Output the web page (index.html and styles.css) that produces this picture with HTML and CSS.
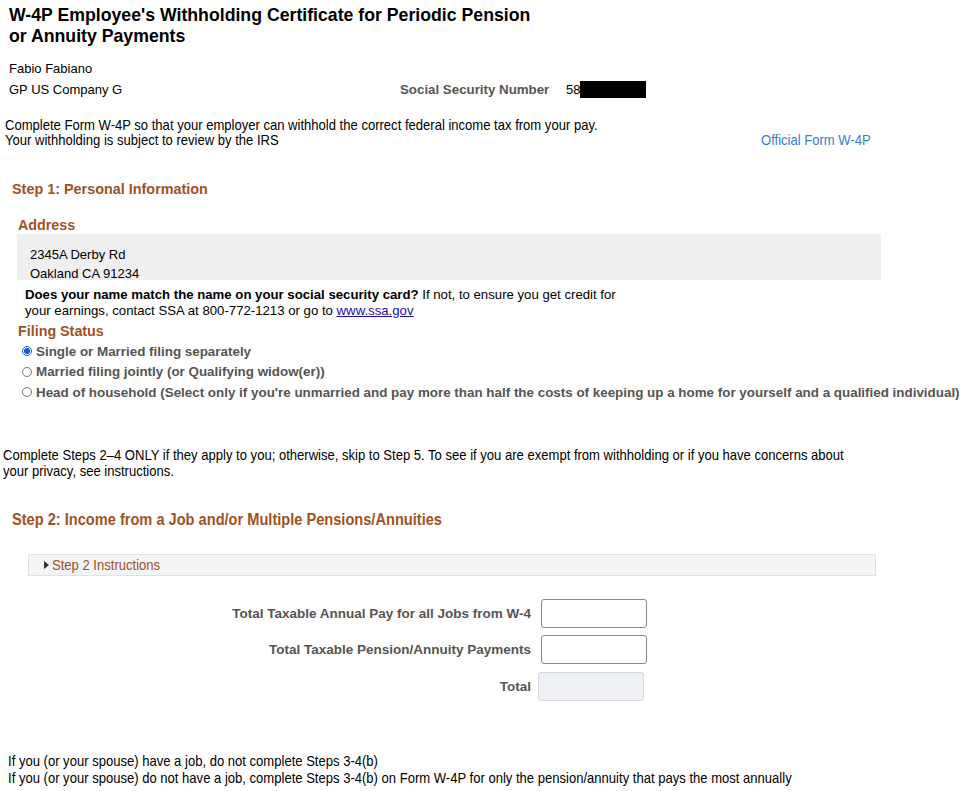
FILE: index.html
```html
<!DOCTYPE html>
<html>
<head>
<meta charset="utf-8">
<link rel="stylesheet" href="styles.css">
</head>
<body>
<div class="page">
  <h1 class="title">W-4P Employee's Withholding Certificate for Periodic Pension<br>or Annuity Payments</h1>

  <div class="ident">
    <div class="name">Fabio Fabiano</div>
    <div class="company-row">
      <span class="company">GP US Company G</span>
      <span class="ssn-label">Social Security Number</span>
      <span class="ssn-value">58<span class="redact"></span></span>
    </div>
  </div>

  <div class="intro">
    <div class="intro-text">
      <div class="line"><span class="narrow">Complete Form W-4P so that your employer can withhold the correct federal income tax from your pay.</span></div>
      <div class="line"><span class="narrow">Your withholding is subject to review by the IRS</span></div>
    </div>
    <div class="line"><a class="official narrow" href="#">Official Form W-4P</a></div>
  </div>

  <h2 class="step1">Step 1: Personal Information</h2>

  <div class="section-label address-label">Address</div>
  <div class="address-box">
    <div>2345A Derby Rd</div>
    <div>Oakland CA 91234</div>
  </div>
  <p class="match"><b>Does your name match the name on your social security card?</b> If not, to ensure you get credit for<br>your earnings, contact SSA at 800-772-1213 or go to <a href="#">www.ssa.gov</a></p>

  <div class="section-label filing-label">Filing Status</div>
  <div class="radios">
    <label class="radio"><span class="dot checked"></span>Single or Married filing separately</label>
    <label class="radio"><span class="dot"></span>Married filing jointly (or Qualifying widow(er))</label>
    <label class="radio"><span class="dot"></span>Head of household (Select only if you're unmarried and pay more than half the costs of keeping up a home for yourself and a qualified individual)</label>
  </div>

  <div class="steps-note">
    <div class="line"><span class="narrow">Complete Steps 2–4 ONLY if they apply to you; otherwise, skip to Step 5. To see if you are exempt from withholding or if you have concerns about</span></div>
    <div class="line"><span class="narrow">your privacy, see instructions.</span></div>
  </div>

  <h2 class="step2"><span class="narrow">Step 2: Income from a Job and/or Multiple Pensions/Annuities</span></h2>

  <div class="instr-bar"><span class="tri"></span><span class="narrow instr-text">Step 2 Instructions</span></div>

  <div class="fields">
    <div class="field"><span class="flabel">Total Taxable Annual Pay for all Jobs from W-4</span><span class="input"></span></div>
    <div class="field"><span class="flabel">Total Taxable Pension/Annuity Payments</span><span class="input"></span></div>
    <div class="field total"><span class="flabel">Total</span><span class="input disabled"></span></div>
  </div>

  <div class="bottom-note">
    <div class="line"><span class="narrow">If you (or your spouse) have a job, do not complete Steps 3-4(b)</span></div>
    <div class="line"><span class="narrow">If you (or your spouse) do not have a job, complete Steps 3-4(b) on Form W-4P for only the pension/annuity that pays the most annually</span></div>
  </div>
</div>
</body>
</html>
```
FILE: styles.css
```css
html, body {
  margin: 0;
  padding: 0;
  background: #fff;
}
body {
  font-family: "Liberation Sans", Arial, sans-serif;
  font-size: 13px;
  color: #000;
}
.page {
  width: 968px;
}
.narrow {
  display: inline-block;
  white-space: nowrap;
  transform: scaleX(0.87);
  transform-origin: left center;
}
.title {
  margin: 0;
  padding: 5px 0 0 9px;
  font-size: 17.7px;
  line-height: 21px;
  font-weight: bold;
}
.ident {
  padding: 13px 0 0 9px;
}
.name {
  line-height: 17px;
}
.company-row {
  display: flex;
  align-items: center;
  height: 24px;
}
.company {
  width: 391px;
}
.ssn-label {
  color: #555;
  font-weight: bold;
  width: 166px;
  font-size: 13.3px;
}
.ssn-value {
  display: flex;
  align-items: center;
}
.redact {
  display: inline-block;
  width: 66px;
  height: 17px;
  background: #000;
}
.intro {
  display: flex;
  align-items: flex-end;
  padding: 17px 0 0 5px;
  font-size: 14.5px;
  line-height: 15px;
}
.intro .narrow {
  transform: scaleX(0.9);
}
.intro .line {
  height: 15px;
}
.intro-text {
  width: 756px;
}
.official {
  color: #3a7bd5;
  text-decoration: none;
}
.step1 {
  margin: 0;
  padding: 33px 0 0 12px;
  color: #a0521e;
  font-size: 14.4px;
  font-weight: bold;
  line-height: 16px;
}
.section-label {
  color: #a0521e;
  font-weight: bold;
  font-size: 14.3px;
  line-height: 16px;
  padding-left: 18px;
}
.address-label {
  margin-top: 20px;
}
.address-box {
  margin: 1px 87px 0 17px;
  background: #efefef;
  padding: 11px 0 0 13px;
  height: 46px;
  box-sizing: border-box;
  line-height: 19px;
}
.match {
  margin: 7px 0 0 25px;
  line-height: 16px;
  font-size: 13.2px;
}
.match a {
  color: #1a0dab;
}
.filing-label {
  margin-top: 4px;
}
.radios {
  display: flex;
  flex-direction: column;
  padding-left: 22px;
  margin-top: 2px;
}
.radio {
  display: flex;
  align-items: center;
  height: 20.5px;
  color: #555;
  font-weight: bold;
  font-size: 13.4px;
}
.dot {
  width: 10px;
  height: 10px;
  border: 1px solid #777;
  border-radius: 50%;
  box-sizing: border-box;
  margin-right: 4px;
  background: #fff;
  flex: none;
}
.dot.checked {
  border-color: #0f5fd6;
  background: radial-gradient(circle, #0f5fd6 0 2.8px, #fff 3.2px);
}
.steps-note {
  margin: 44px 0 0 3px;
  font-size: 15px;
  line-height: 16px;
}
.steps-note .line {
  height: 16px;
}
.step2 {
  margin: 0;
  padding: 33px 0 0 12px;
  color: #a0521e;
  font-size: 16.8px;
  font-weight: bold;
  line-height: 16px;
}
.instr-bar {
  margin: 26px 92px 0 28px;
  height: 20px;
  border: 1px solid #dfe3e5;
  background: #f2f4f5;
  display: flex;
  align-items: center;
  padding-left: 15px;
}
.tri {
  width: 0;
  height: 0;
  border-top: 4px solid transparent;
  border-bottom: 4px solid transparent;
  border-left: 5px solid #333;
  margin-right: 3px;
}
.instr-text {
  color: #a0521e;
  font-size: 15px;
}
.fields {
  margin-top: 23px;
  display: flex;
  flex-direction: column;
  gap: 7px;
}
.field {
  display: flex;
  align-items: center;
}
.flabel {
  width: 541px;
  text-align: right;
  color: #555;
  font-weight: bold;
  font-size: 13.5px;
  padding-right: 10px;
  box-sizing: border-box;
}
.input {
  width: 106px;
  height: 29px;
  border: 1px solid #888;
  border-radius: 3px;
  box-sizing: border-box;
  background: #fff;
}
.total {
  margin-top: 1px;
}
.total .input {
  margin-left: -3px;
}
.input.disabled {
  background: #eef0f3;
  border-color: #d5d8dc;
}
.bottom-note {
  margin: 51px 0 0 8px;
  font-size: 15px;
  line-height: 17px;
}
.bottom-note .line {
  height: 17px;
}
```
